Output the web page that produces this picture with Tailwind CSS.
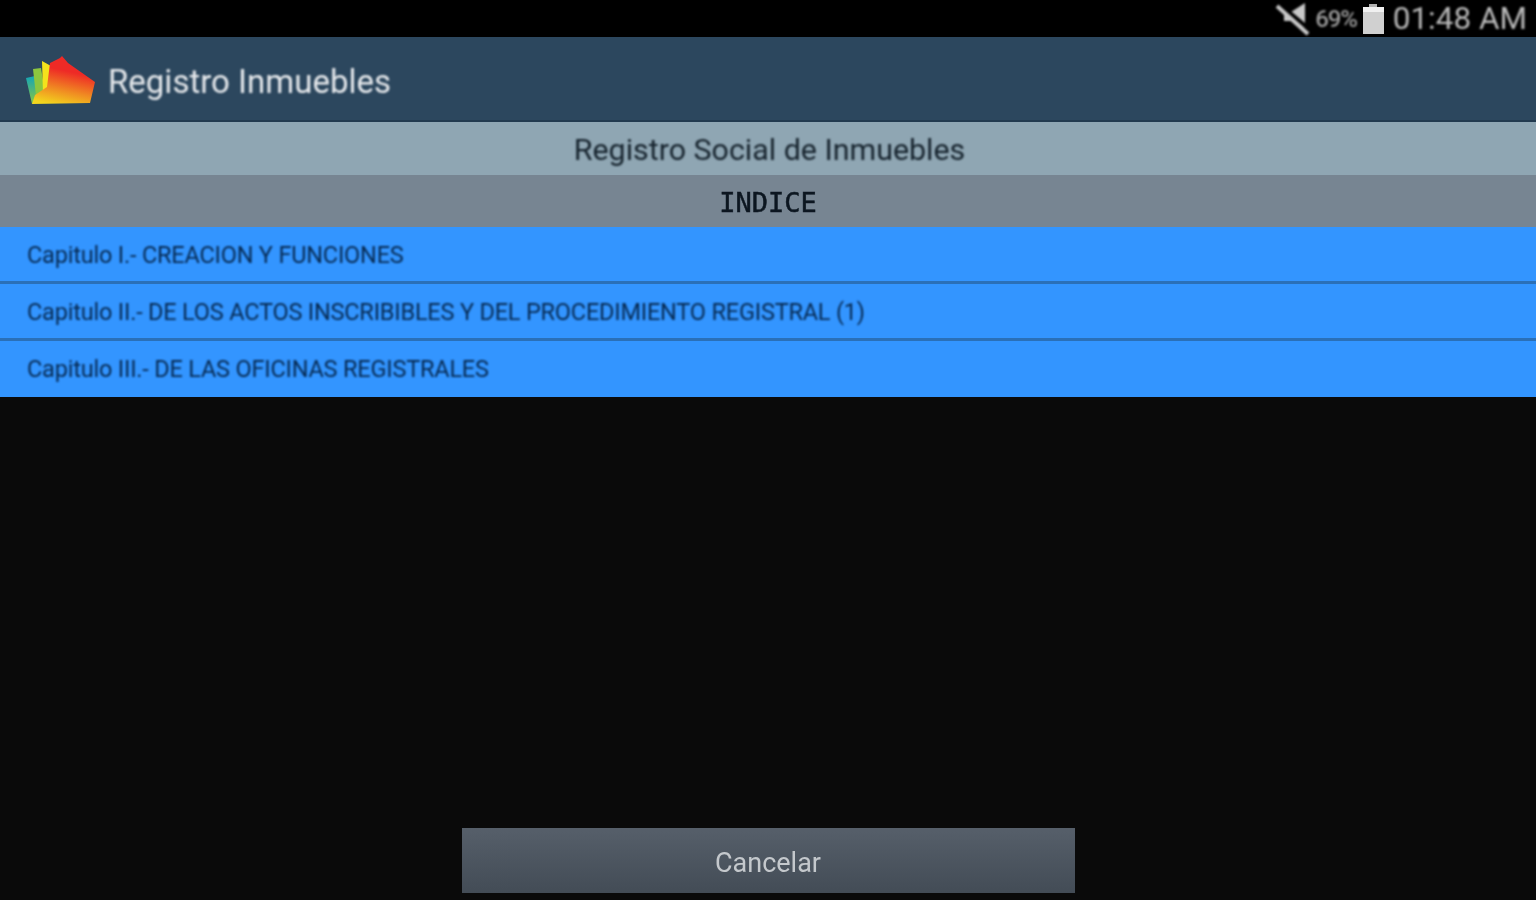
<!DOCTYPE html>
<html lang="es">
<head>
  <meta charset="UTF-8">
  <meta name="viewport" content="width=device-width, initial-scale=1.0">
  <script src="https://cdn.jsdelivr.net/npm/@tailwindcss/browser@4"></script>
  <title>Registro Inmuebles</title>
</head>
<body class="bg-[#0a0a0a] font-['Roboto',sans-serif]">
  <div class="flex flex-col h-[900px] w-[1536px] overflow-hidden">

    <!-- status bar -->
    <div class="h-[37px] bg-black flex items-center justify-end pr-[9px] text-[#b4b4b4]">
      <svg class="w-[36px] h-[36px] mr-[5px] [filter:blur(0.9px)]" viewBox="0 0 36 36">
        <path d="M10 11 L17 11 L31 2 L31 27 L17 20 L10 20 Z" fill="#c8c8c8"/>
        <path d="M3 1 L35 28" stroke="#000" stroke-width="4"/>
        <path d="M3 5 L34 33" stroke="#c8c8c8" stroke-width="4"/>
      </svg>
      <span class="text-[24px] tracking-[-1.2px] mr-[6px] text-[#9a9a9a] font-medium [filter:blur(0.9px)]">69%</span>
      <div class="flex flex-col items-center mr-[9px] mt-[1px] [filter:blur(0.7px)]">
        <div class="w-[8px] h-[3px] bg-[#b0b0b0]"></div>
        <div class="w-[21px] h-[27px] bg-[#d0d0d0] border-t-[5px] border-[#f0f0f0]"></div>
      </div>
      <span class="text-[31.5px] leading-none text-[#b8b8b8] [filter:blur(0.9px)]">01:48 AM</span>
    </div>

    <!-- action bar -->
    <div class="h-[85px] bg-[#2c475e] border-b-[2px] border-[#223a4f] flex items-center pl-[26px]">
      <svg class="w-[70px] h-[52px] mr-[12px] mt-[2px] [filter:blur(0.7px)]" viewBox="0 0 70 52">
        <defs>
          <linearGradient id="house" x1="0.3" y1="1" x2="0.5" y2="0.3">
            <stop offset="0" stop-color="#f2d51e"/>
            <stop offset="0.45" stop-color="#f08a22"/>
            <stop offset="1" stop-color="#ee2a26"/>
          </linearGradient>
          <linearGradient id="fan" x1="0" y1="0" x2="0" y2="1">
            <stop offset="0" stop-color="#12a5b8"/>
            <stop offset="1" stop-color="#8cc63f"/>
          </linearGradient>
        </defs>
        <path d="M0 24 L9 22 L14 48 L6 50 Z" fill="url(#fan)"/>
        <path d="M7 15 L15 14 L20 44 L10 42 Z" fill="#8cc63f"/>
        <path d="M16 7 L25 12 L24 34 L17 40 Z" fill="#f4e21c"/>
        <path d="M24 9 L34 4 L36 2 L42 9 L69 28 L64 49 L6 50 L9 41 L21 33 Z" fill="url(#house)"/>
      </svg>
      <span class="text-[33px] text-[#e6e9ec] [filter:blur(0.8px)] leading-none mt-[5px]">Registro Inmuebles</span>
    </div>

    <!-- headings -->
    <div class="h-[53px] bg-[#8fa6b3] flex items-center justify-center pt-[2px] pl-[3px] text-[30.4px] text-[#16232d]"><span class="[filter:blur(0.8px)]">Registro Social de Inmuebles</span></div>
    <div class="h-[52px] bg-[#778592] flex items-center justify-center pt-[5px] font-['DejaVu_Sans_Mono',monospace] text-[27px] text-[#0c1620]"><span class="[filter:blur(0.7px)] [-webkit-text-stroke:0.5px_#0c1620]">INDICE</span></div>

    <!-- capitulos -->
    <div class="flex flex-col bg-[#2a70b8]">
      <div class="h-[54px] bg-[#3395ff] flex items-center pl-[27px] pt-[3px] text-[23.5px] tracking-[-0.2px] text-[#072a52]"><span class="[filter:blur(0.8px)]">Capitulo I.- CREACION Y FUNCIONES</span></div>
      <div class="h-[54px] mt-[3px] bg-[#3395ff] flex items-center pl-[27px] pt-[3px] text-[23.5px] tracking-[-0.2px] text-[#072a52]"><span class="[filter:blur(0.8px)]">Capitulo II.- DE LOS ACTOS INSCRIBIBLES Y DEL PROCEDIMIENTO REGISTRAL (1)</span></div>
      <div class="h-[56px] mt-[3px] bg-[#3395ff] flex items-center pl-[27px] pt-[2px] text-[23.5px] tracking-[-0.2px] text-[#072a52]"><span class="[filter:blur(0.8px)]">Capitulo III.- DE LAS OFICINAS REGISTRALES</span></div>
    </div>

    <!-- boton -->
    <div class="flex-1 flex items-end justify-center pb-[7px]">
      <button class="w-[613px] h-[65px] pt-[5px] bg-gradient-to-b from-[#565f6a] to-[#434c56] text-[27px] text-[#c4c8cc] [filter:blur(0.5px)]"><span class="[filter:blur(0.4px)] inline-block">Cancelar</span></button>
    </div>
  </div>
</body>
</html>
